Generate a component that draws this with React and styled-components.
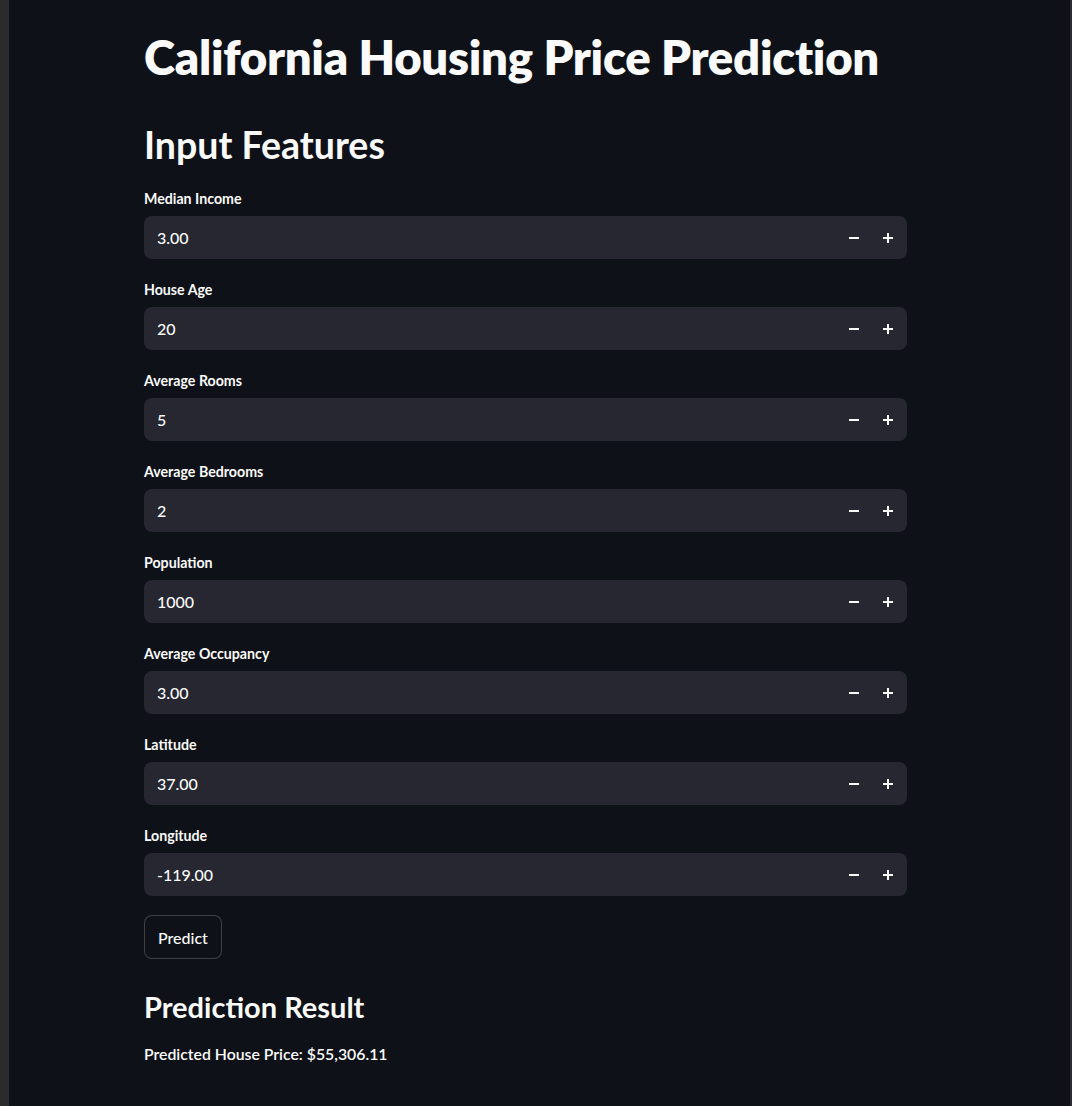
import styled, { createGlobalStyle } from "styled-components";

const GlobalStyle = createGlobalStyle`
  html, body {
    margin: 0;
    padding: 0;
    background-color: #0e1117;
  }
  body {
    font-family: Lato, "Noto Sans", sans-serif;
    color: #fafafa;
    overflow: hidden;
  }
`;

const Frame = styled.div`
  display: flex;
  min-height: 1106px;
  background-color: #0e1117;
`;

const Gutter = styled.div`
  flex: 0 0 ${(p) => p.$width}px;
  background-color: #2b2b2d;
`;

const Main = styled.main`
  flex: 1;
  padding: 26px 0 0 135px;
`;

const Content = styled.div`
  width: 763px;
  display: flex;
  flex-direction: column;
`;

const Title = styled.h1`
  margin: 0;
  font-size: 47.3px;
  font-weight: 800;
  line-height: 62px;
  letter-spacing: -0.3px;
`;

const Subtitle = styled.h2`
  margin: 33px 0 0;
  font-size: 37.5px;
  font-weight: 700;
  line-height: 48px;
`;

const Fields = styled.div`
  display: flex;
  flex-direction: column;
  gap: 22px;
  margin-top: 21px;
`;

const Field = styled.div`
  display: flex;
  flex-direction: column;
  gap: 8px;
`;

const Label = styled.label`
  font-size: 14.2px;
  font-weight: 700;
  line-height: 18px;
  color: #fafafa;
`;

const InputBox = styled.div`
  display: flex;
  align-items: center;
  height: 43px;
  border-radius: 8px;
  background-color: #262730;
  padding: 0 2px 0 13px;
`;

const Value = styled.span`
  flex: 1;
  font-size: 16px;
  font-weight: 500;
`;

const Step = styled.span`
  width: 34px;
  display: flex;
  justify-content: center;
  align-items: center;
`;

const Button = styled.button`
  align-self: flex-start;
  margin-top: 19px;
  height: 44px;
  padding: 0 13px;
  border-radius: 8px;
  border: 1px solid rgba(250, 250, 250, 0.2);
  background-color: #0e1117;
  color: #fafafa;
  font-family: Lato, "Noto Sans", sans-serif;
  font-size: 16px;
  font-weight: 500;
`;

const ResultTitle = styled.h3`
  margin: 29px 0 0;
  font-size: 29px;
  font-weight: 700;
  line-height: 38px;
`;

const ResultText = styled.p`
  margin: 17px 0 0;
  font-size: 15.8px;
  font-weight: 600;
  line-height: 22px;
`;

const Minus = () => (
  <svg width="10" height="10" viewBox="0 0 10 10">
    <path d="M0 5h10" stroke="#fafafa" strokeWidth="2" />
  </svg>
);

const Plus = () => (
  <svg width="10" height="10" viewBox="0 0 10 10">
    <path d="M0 5h10M5 0v10" stroke="#fafafa" strokeWidth="2" />
  </svg>
);

const fields = [
  ["Median Income", "3.00"],
  ["House Age", "20"],
  ["Average Rooms", "5"],
  ["Average Bedrooms", "2"],
  ["Population", "1000"],
  ["Average Occupancy", "3.00"],
  ["Latitude", "37.00"],
  ["Longitude", "-119.00"],
];

export default function App() {
  return (
    <>
      <GlobalStyle />
      <Frame>
        <Gutter $width={9} />
        <Main>
          <Content>
            <Title>California Housing Price Prediction</Title>
            <Subtitle>Input Features</Subtitle>
            <Fields>
              {fields.map(([label, value]) => (
                <Field key={label}>
                  <Label>{label}</Label>
                  <InputBox>
                    <Value>{value}</Value>
                    <Step>
                      <Minus />
                    </Step>
                    <Step>
                      <Plus />
                    </Step>
                  </InputBox>
                </Field>
              ))}
            </Fields>
            <Button>Predict</Button>
            <ResultTitle>Prediction Result</ResultTitle>
            <ResultText>Predicted House Price: $55,306.11</ResultText>
          </Content>
        </Main>
        <Gutter $width={2} />
      </Frame>
    </>
  );
}
